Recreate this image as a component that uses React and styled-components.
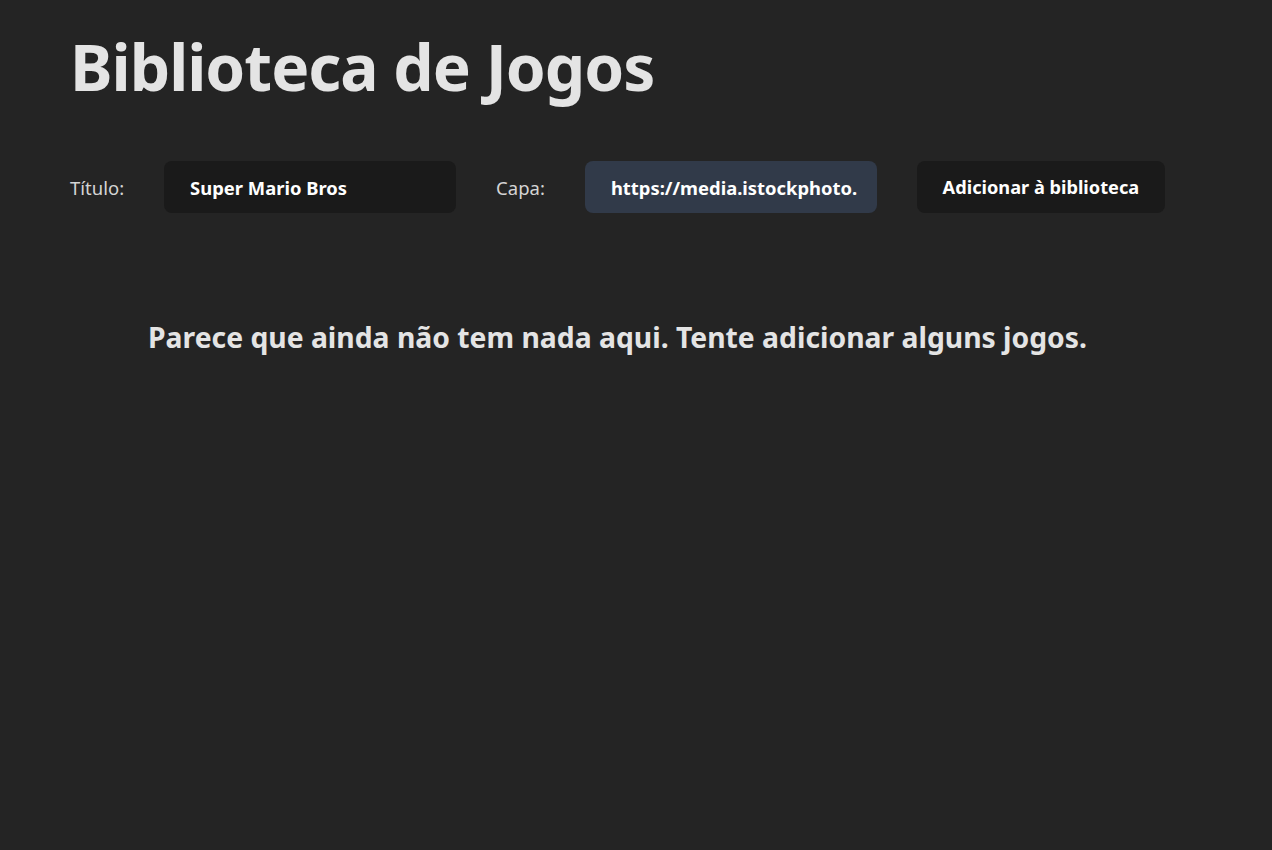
import React, { useState } from "react";
import styled, { createGlobalStyle } from "styled-components";

const Global = createGlobalStyle`
  html, body { margin: 0; padding: 0; background: #242424; }
  body {
    font-family: "Noto Sans", "Open Sans", sans-serif;
    color: rgba(255,255,255,0.87);
    min-height: 850px;
  }
  * { box-sizing: border-box; }
`;

const Page = styled.div`
  width: 1095px;
  margin-left: 70px;
  padding-top: 17px;
`;

const Title = styled.h1`
  margin: 0;
  font-size: 64px;
  font-weight: 700;
  line-height: 100px;
  color: #e4e4e4;
  letter-spacing: -1px;
`;

const Form = styled.form`
  display: flex;
  align-items: center;
  margin-top: 44px;
  height: 52px;
`;

const Label = styled.label`
  font-size: 18.5px;
  color: #d4d4d4;
  margin-right: ${(p) => p.$gap}px;
`;

const Input = styled.input`
  width: 292px;
  height: 52px;
  border: none;
  outline: none;
  border-radius: 8px;
  background: ${(p) => (p.$active ? "#313a49" : "#1a1a1a")};
  color: #ffffff;
  font-family: inherit;
  font-size: 18.4px;
  font-weight: 700;
  padding: 0 ${(p) => (p.$active ? 18 : 26)}px 0 26px;
  margin-right: ${(p) => p.$after}px;
`;

const Button = styled.button`
  width: 248px;
  height: 52px;
  border: none;
  border-radius: 8px;
  background: #1a1a1a;
  color: #ffffff;
  font-family: inherit;
  font-size: 18.2px;
  font-weight: 700;
  padding: 0;
  cursor: pointer;
`;

const Empty = styled.h2`
  margin: 105px 0 0;
  text-align: center;
  font-size: 28.3px;
  font-weight: 700;
  color: #e4e4e4;
`;

export default function App() {
  const [title, setTitle] = useState("Super Mario Bros");
  const [cover, setCover] = useState("https://media.istockphoto.");
  return (
    <>
      <Global />
      <Page>
        <Title>Biblioteca de Jogos</Title>
        <Form onSubmit={(e) => e.preventDefault()}>
          <Label $gap={40}>Título:</Label>
          <Input $after={40} value={title} onChange={(e) => setTitle(e.target.value)} />
          <Label $gap={40}>Capa:</Label>
          <Input $active $after={40} value={cover} onChange={(e) => setCover(e.target.value)} />
          <Button type="submit">Adicionar à biblioteca</Button>
        </Form>
        <Empty>Parece que ainda não tem nada aqui. Tente adicionar alguns jogos.</Empty>
      </Page>
    </>
  );
}
